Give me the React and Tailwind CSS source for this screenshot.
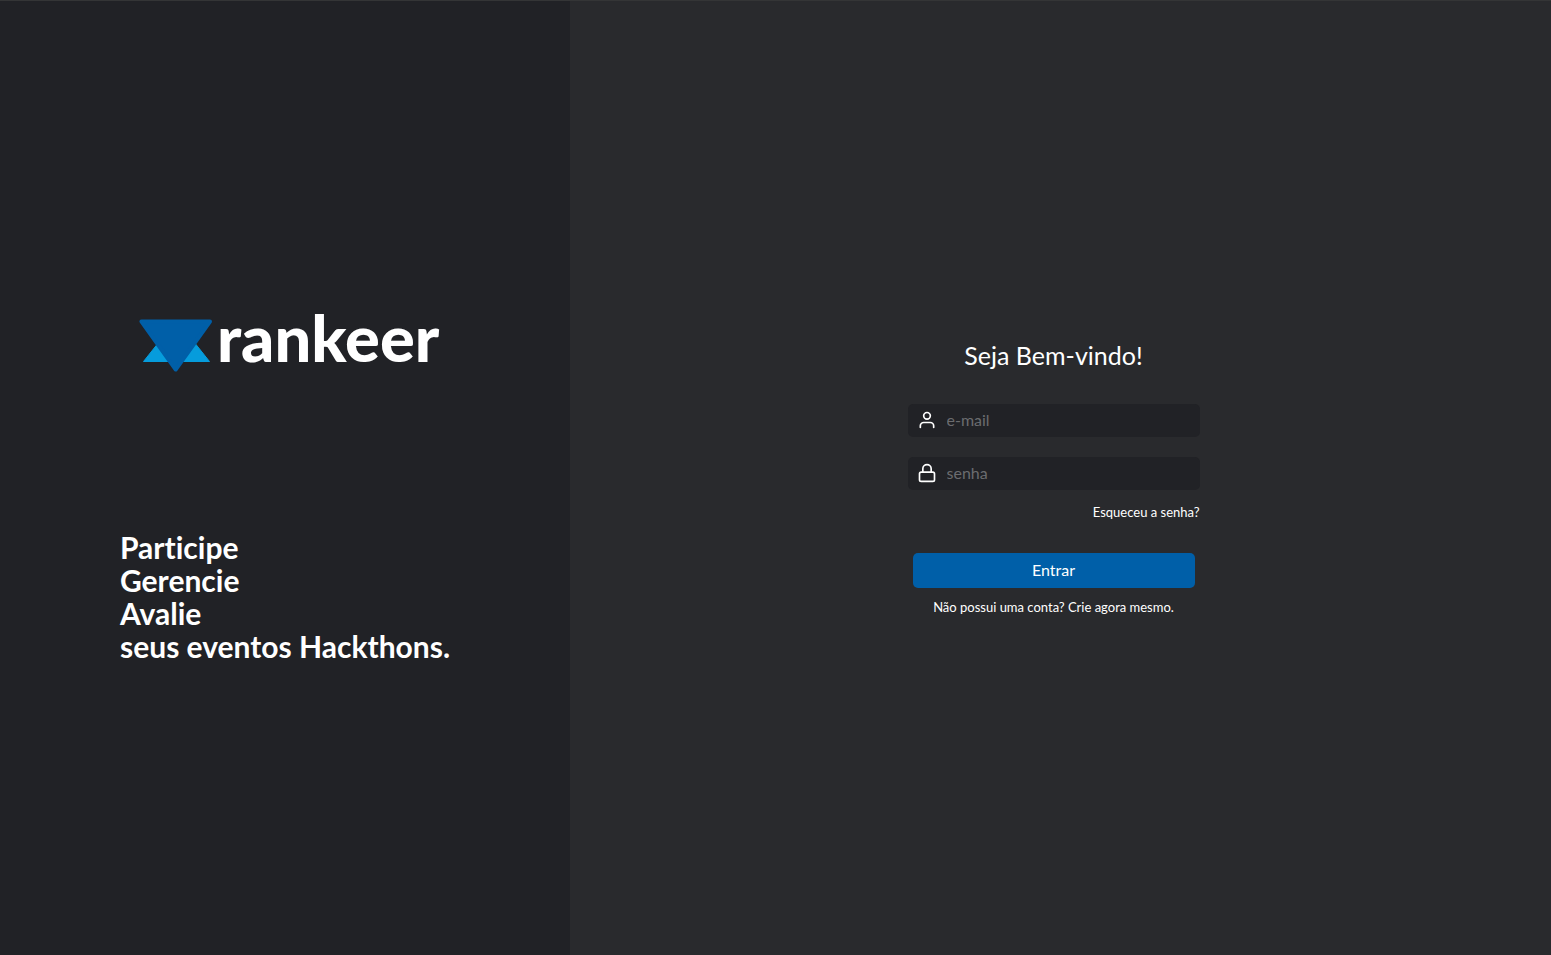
import { FiUser, FiLock } from "react-icons/fi";

function Logo() {
  return (
    <div className="flex h-25 items-center pl-[19px]">
      <svg className="mt-1 h-[54px] w-[74px] shrink-0" viewBox="0 0 74 54" aria-hidden="true">
        <path d="M37.5 1 L70.5 42.5 H4.5 Z" fill="#069cdc" stroke="#069cdc" strokeWidth="1" strokeLinejoin="round" />
        <path d="M2.5 2.5 H71 L36.7 50.5 Z" fill="#005fa8" stroke="#005fa8" strokeWidth="4" strokeLinejoin="round" />
      </svg>
      <span className="ml-1 pb-3 text-[65px] leading-none font-black text-white">rankeer</span>
    </div>
  );
}

function Field({ id, type, label, icon: Icon }) {
  return (
    <div className="flex h-[33px] w-full items-center gap-[10px] rounded-[5px] bg-[#212226] px-[9px]">
      <label htmlFor={id} className="block shrink-0" aria-label={label}>
        <Icon size={20} className="block text-white" />
      </label>
      <input
        id={id}
        type={type}
        placeholder={label}
        className="h-full w-full min-w-0 bg-transparent pb-px text-base text-white outline-none placeholder:text-[#6b6c6f]"
      />
    </div>
  );
}

export default function App() {
  return (
    <div className="flex min-h-screen border-t border-[#343536] bg-[#292a2d] font-['Lato',sans-serif] text-white">
      <aside className="flex w-[570px] shrink-0 flex-col justify-center gap-[137px] bg-[#212226] px-[120px]">
        <Logo />
        <h1 className="text-[30px] leading-[33px] font-bold whitespace-nowrap [font-variant-ligatures:none]">
          Participe
          <br />
          Gerencie
          <br />
          Avalie
          <br />
          seus eventos Hackthons.
        </h1>
      </aside>
      <main className="flex flex-1 items-center justify-center pr-3.5">
        <form className="flex w-[292px] flex-col items-center" onSubmit={(e) => e.preventDefault()}>
          <h2 className="pb-[34px] text-[25px] leading-[30px]">Seja Bem-vindo!</h2>
          <div className="flex w-full flex-col gap-5">
            <Field id="email" type="email" label="e-mail" icon={FiUser} />
            <Field id="senha" type="password" label="senha" icon={FiLock} />
          </div>
          <a href="#recuperar" className="mt-3 self-end text-[13px] leading-5">
            Esqueceu a senha?
          </a>
          <button type="submit" className="mt-[31px] h-[35px] w-[282px] rounded-[5px] bg-[#005fa8] text-base">
            Entrar
          </button>
          <a href="#cadastro" className="mt-[9px] text-[13px] leading-5">
            Não possui uma conta? Crie agora mesmo.
          </a>
        </form>
      </main>
    </div>
  );
}
